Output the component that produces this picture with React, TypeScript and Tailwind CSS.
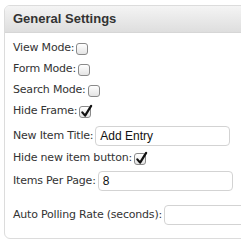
import React from "react";

function Check({ checked }: { checked?: boolean }) {
  return (
    <span className="relative inline-block w-[12px] h-[12px] ml-[2px] rounded-[3px] border border-[#8a8a8a] bg-gradient-to-b from-[#ffffff] to-[#e4e4e4] shrink-0">
      {checked && (
        <svg viewBox="0 0 14 14" className="absolute left-[0px] top-[-3px] w-[13px] h-[14px]">
          <path d="M2.5 8.5 L5.5 12 L12 1.5" fill="none" stroke="#111" strokeWidth="2.4" strokeLinecap="round" strokeLinejoin="round" />
        </svg>
      )}
    </span>
  );
}

function CheckRow({ label, checked }: { label: string; checked?: boolean }) {
  return (
    <div className="flex items-center h-[21px] whitespace-nowrap">
      <span>{label}</span>
      <Check checked={checked} />
    </div>
  );
}

function InputRow({ label, value, w }: { label: string; value?: string; w: string }) {
  return (
    <div className="flex items-center h-[22px] whitespace-nowrap">
      <span className="mr-[2px]">{label}</span>
      <div className={`h-[20px] ${w} rounded-[4px] border border-[#d3d3d3] bg-white flex items-center px-[4px] text-[12px] tracking-normal text-[#111] font-['Liberation_Sans',sans-serif] shrink-0`}>
        {value}
      </div>
    </div>
  );
}

export default function App() {
  return (
    <div className="w-[241px] h-[249px] bg-white overflow-hidden font-['DejaVu_Sans',sans-serif] text-[11px] tracking-[-0.2px] text-[#333]">
      <div className="ml-[4px] mt-[5px] w-[260px] h-[234px] rounded-[6px] border border-[#dcdcdc] overflow-hidden">
        <div className="h-[27px] bg-gradient-to-b from-[#f4f4f4] to-[#dedede] border-b border-[#d6d6d6] flex items-center pl-[8px] text-[13px] tracking-normal font-bold text-[#333] font-['Liberation_Sans',sans-serif]">
          General Settings
        </div>
        <div className="pl-[8px] pt-[5px] flex flex-col">
          <CheckRow label="View Mode:" />
          <CheckRow label="Form Mode:" />
          <CheckRow label="Search Mode:" />
          <CheckRow label="Hide Frame:" checked />
          <div className="mt-[3px]">
            <InputRow label="New Item Title:" value="Add Entry" w="w-[135px]" />
          </div>
          <div className="mt-[1px]">
            <CheckRow label="Hide new item button:" checked />
          </div>
          <div className="mt-[1px]">
            <InputRow label="Items Per Page:" value="8" w="w-[135px]" />
          </div>
          <div className="mt-[12px]">
            <InputRow label="Auto Polling Rate (seconds):" w="w-[120px]" />
          </div>
        </div>
      </div>
    </div>
  );
}
